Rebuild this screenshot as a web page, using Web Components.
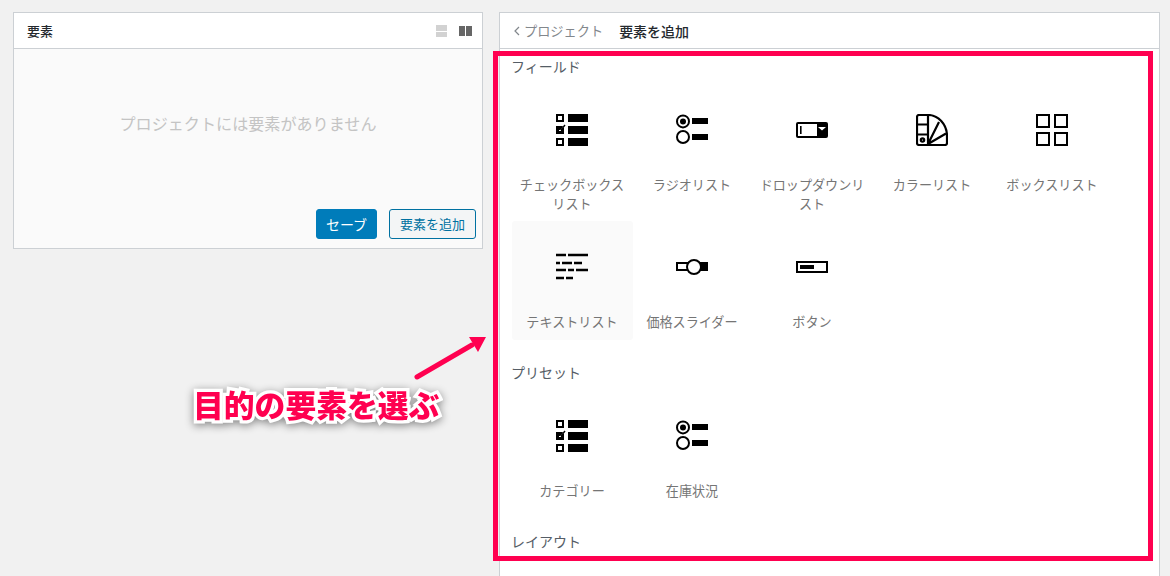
<!DOCTYPE html>
<html lang="ja"><head><meta charset="utf-8"><title>要素を追加</title>
<style>
html,body{margin:0;height:576px;overflow:hidden;background:#f1f1f1;font-family:"Noto Sans CJK JP","Noto Sans",sans-serif}
</style></head><body>
<app-root></app-root>
<script>
const ICONS={
check:`<g fill="none" stroke="#000" stroke-width="2"><rect x="1" y="1" width="6" height="6"/><rect x="1" y="25" width="6" height="6"/></g><path d="M0 12h7l-1 2h2v6H0z"/><path d="M3 16l1 1 4-5" fill="none" stroke="#fff" stroke-width="1"/><path d="M5 16l4-5" stroke="#000" stroke-width="1.4"/><rect x="12" y="0" width="20" height="8"/><rect x="12" y="12" width="20" height="8"/><rect x="12" y="24" width="20" height="8"/>`,
radio:`<g fill="none" stroke="#000" stroke-width="2"><circle cx="7" cy="7.4" r="6"/><circle cx="7" cy="23" r="6"/></g><circle cx="7" cy="7.4" r="3"/><rect x="16" y="4" width="16" height="6"/><rect x="16" y="20" width="16" height="6"/>`,
drop:`<rect x="0" y="8" width="32" height="16" rx="2"/><rect x="2" y="10" width="19" height="12" fill="#fff"/><rect x="4" y="12" width="1.6" height="8"/><path d="M22 13h8l-4 3.6z" fill="#fff"/>`,
palette:`<g fill="none" stroke="#000" stroke-width="2.200" stroke-linejoin="round"><path d="M3 1h9v30H3a2 2 0 0 1-2-2V3a2 2 0 0 1 2-2z"/><path d="M1 10.500h11M1 20.500h11"/><path d="M12 1c10 0 19 9 19 21v7a2 2 0 0 1-2 2H12"/><path d="M12 30L23 8M12 30l18-10.500"/><circle cx="6.500" cy="26" r="1.700"/></g>`,
boxes:`<g fill="none" stroke="#000" stroke-width="2"><rect x="1" y="1" width="12" height="12"/><rect x="19" y="1" width="12" height="12"/><rect x="1" y="19" width="12" height="12"/><rect x="19" y="19" width="12" height="12"/></g>`,
text:`<g stroke="#000" stroke-width="2.400"><path d="M0 4h10M12 4h20M0 12h4M6 12h10M18 12h8M0 19h10M12 19h6M20 19h12M0 27h8M10 27h7"/></g>`,
slider:`<rect x="1" y="12" width="14" height="7" fill="none" stroke="#000" stroke-width="2"/><rect x="24" y="11" width="8" height="9"/><circle cx="18" cy="16" r="7" fill="#fff" stroke="#000" stroke-width="2"/>`,
button:`<rect x="1" y="11" width="30" height="10" fill="none" stroke="#000" stroke-width="2"/><rect x="4" y="14" width="14" height="4"/>`
};
class BaseEl extends HTMLElement{
  render(html){ if(!this.shadowRoot) this.attachShadow({mode:'open'}); this.shadowRoot.innerHTML=html; }
}
class ElIcon extends BaseEl{connectedCallback(){this.render(`<style>:host{display:block;width:32px;height:32px}svg{display:block}</style><svg width="32" height="32" viewBox="0 0 32 32">${ICONS[this.getAttribute('name')]}</svg>`)}}
class ElItem extends BaseEl{connectedCallback(){this.render(`<style>
:host{display:flex;flex-direction:column;align-items:center;box-sizing:border-box;width:120px;padding:30px 0 9px;border-radius:3px;font-size:13.100px;line-height:19px;color:#757575;text-align:center}
:host([active]){background:#fafafa;box-shadow:1px 0 0 #fafafa}
.l{margin-top:29px;width:110px;word-break:break-all}
</style><el-icon name="${this.getAttribute('icon')}"></el-icon><div class="l"><slot></slot></div>`)}}
class ElGrid extends BaseEl{connectedCallback(){this.render(`<style>:host{display:grid;grid-template-columns:repeat(5,120px);align-items:stretch}</style><slot></slot>`)}}
class ElHeading extends BaseEl{connectedCallback(){this.render(`<style>:host{display:block;margin-left:-1px;font-size:14px;line-height:20px;color:#555d66}</style><slot></slot>`)}}
class ElButton extends BaseEl{connectedCallback(){this.render(`<style>
:host{display:flex;align-items:center;justify-content:center;box-sizing:border-box;height:30px;padding-bottom:1px;border-radius:3px;font-size:13px;border:1px solid #0071a1;background:#f3f5f6;color:#0071a1;width:87px}
:host([primary]){background:#007cba;border-color:#007cba;color:#fff;width:61px;font-size:14px}
</style><slot></slot>`)}}
class ElPanel extends BaseEl{connectedCallback(){this.render(`<style>
:host{display:block;box-sizing:border-box;background:#fff;border:1px solid #ccd0d4}
header{display:flex;align-items:center;box-sizing:border-box;height:36px;border-bottom:1px solid #ccd0d4;padding:0 10px 0 13px}
.sp{flex:1}
</style><header><slot name="head"></slot><span class="sp"></span><slot name="tools"></slot></header><slot></slot>`)}}
class ElTools extends BaseEl{connectedCallback(){this.render(`<style>:host{display:flex;gap:12px;align-items:center}svg{display:block}</style>
<svg width="11" height="12" viewBox="0 0 11 12"><rect width="11" height="6" fill="#d2d2d2"/><rect y="7" width="11" height="5" fill="#d2d2d2"/></svg>
<svg width="13" height="10" viewBox="0 0 13 10"><rect width="6" height="10" fill="#666"/><rect x="7" width="6" height="10" fill="#666"/></svg>`)}}
class ElAnnot extends BaseEl{connectedCallback(){this.render(`<style>
:host{position:absolute;inset:0;pointer-events:none}
.frame{position:absolute;left:493px;top:51px;width:660px;height:510px;box-sizing:border-box;border:5px solid #ff0050}
svg{position:absolute;left:0;top:0}
.t{position:absolute;left:193px;top:382px;font-size:30.800px;line-height:44px;font-weight:900;color:#ff0050;white-space:nowrap;-webkit-text-stroke:6.500px #fff;paint-order:stroke fill;filter:drop-shadow(0 2px 4px rgba(0,0,0,.45))}
</style><div class="frame"></div>
<svg width="1170" height="576" viewBox="0 0 1170 576"><path d="M417 377L472 345" stroke="#ff0050" stroke-width="5" stroke-linecap="round"/><path d="M486 337L469 337L478 352z" fill="#ff0050"/></svg>
<div class="t">目的の要素を選ぶ</div>`)}}
class AppRoot extends BaseEl{connectedCallback(){this.render(`<style>
:host{display:flex;gap:16px;align-items:flex-start;position:relative;box-sizing:border-box;width:1170px;height:576px;padding:12px 10px 0 13px;overflow:hidden}
.left{width:470px;height:237px;flex:none}
.right{width:661px;height:700px;flex:none}
.title{font-size:13px;font-weight:500;color:#23282d}
.body{display:flex;flex-direction:column;height:199px;background:#fafafa}
.empty{display:flex;align-items:center;justify-content:center;height:148px;font-size:16.100px;color:#c4c4c4}
.foot{display:flex;justify-content:flex-end;gap:12px;padding:12px 6px 0 0}
.back{display:flex;align-items:center;gap:3px;color:#82878c;font-size:13.200px}
.cur{margin-left:16px;font-size:14px;font-weight:500;color:#23282d}
.crumb{display:flex;align-items:center}
.content{padding:7px 0 0 12px}
.g1{margin-top:8px;grid-template-rows:137px 119px}
.g2{margin-top:8px}
.sec{margin-top:22px}
</style>
<el-panel class="left"><span class="title" slot="head">要素</span><el-tools slot="tools"></el-tools>
 <div class="body"><div class="empty">プロジェクトには要素がありません</div>
 <div class="foot"><el-button primary>セーブ</el-button><el-button>要素を追加</el-button></div></div></el-panel>
<el-panel class="right"><div class="crumb" slot="head">
  <span class="back"><svg width="8" height="10" viewBox="0 0 8 10"><path d="M6 1L2 5l4 4" fill="none" stroke="#82878c" stroke-width="1.200"/></svg>プロジェクト</span><span class="cur">要素を追加</span></div>
 <div class="content">
  <el-heading>フィールド</el-heading>
  <el-grid class="g1">
   <el-item icon="check">チェックボックスリスト</el-item><el-item icon="radio">ラジオリスト</el-item><el-item icon="drop">ドロップダウンリスト</el-item><el-item icon="palette">カラーリスト</el-item><el-item icon="boxes">ボックスリスト</el-item>
   <el-item icon="text" active>テキストリスト</el-item><el-item icon="slider">価格スライダー</el-item><el-item icon="button">ボタン</el-item>
  </el-grid>
  <el-heading class="sec">プリセット</el-heading>
  <el-grid class="g2">
   <el-item icon="check">カテゴリー</el-item><el-item icon="radio">在庫状況</el-item>
  </el-grid>
  <el-heading class="sec">レイアウト</el-heading>
 </div></el-panel>
<el-annot></el-annot>`)}}
[['el-icon',ElIcon],['el-item',ElItem],['el-grid',ElGrid],['el-heading',ElHeading],['el-button',ElButton],['el-panel',ElPanel],['el-tools',ElTools],['el-annot',ElAnnot],['app-root',AppRoot]].forEach(([n,c])=>customElements.define(n,c));
</script>
</body></html>
